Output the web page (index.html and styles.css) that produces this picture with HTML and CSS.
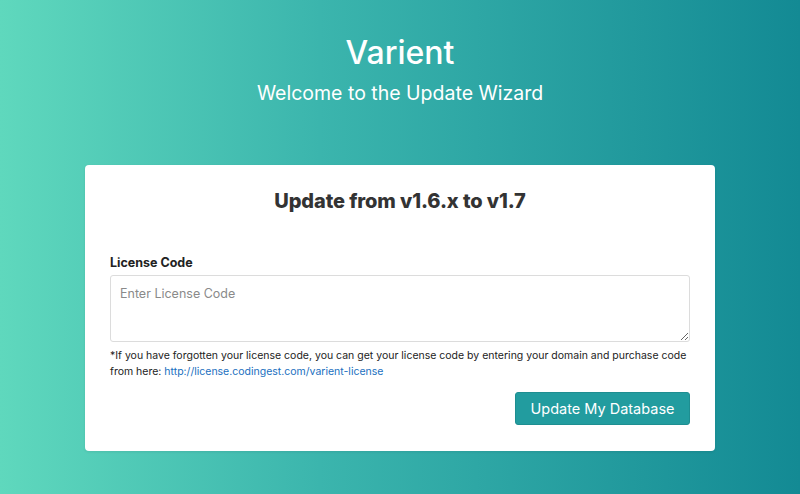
FILE: index.html
```html
<!DOCTYPE html>
<html lang="en">
<head>
<meta charset="utf-8">
<title>Varient - Update Wizard</title>
<link rel="stylesheet" href="styles.css">
</head>
<body>
<header class="hero">
  <h1 class="brand">Varient</h1>
  <p class="tagline">Welcome to the Update Wizard</p>
</header>
<main class="card">
  <h2 class="card-title">Update from v1.6.x to v1.7</h2>
  <form class="form">
    <label class="label" for="license">License Code</label>
    <textarea id="license" class="input" placeholder="Enter License Code"></textarea>
    <p class="note">
      <span class="note-line">*If you have forgotten your license code, you can get your license code by entering your domain and purchase code</span>
      <span class="note-line">from here: <a href="#" class="link">http://license.codingest.com/varient-license</a></span>
    </p>
    <div class="actions">
      <button type="button" class="btn">Update My Database</button>
    </div>
  </form>
</main>
</body>
</html>
```
FILE: styles.css
```css
html, body {
  margin: 0;
  height: 100%;
}
body {
  background: linear-gradient(to right, #5fd8bd 0%, #3bb5ad 40%, #138a94 100%);
  font-family: Inter, "Open Sans", sans-serif;
  color: #333;
  overflow: hidden;
}
.hero {
  text-align: center;
  color: #fff;
  padding-top: 34px;
}
.brand {
  margin: 0;
  font-size: 32px;
  line-height: 38px;
  font-weight: 500;
}
.tagline {
  margin: 9px 0 0;
  font-size: 19.5px;
  line-height: 24px;
  font-weight: 400;
}
.card {
  width: 630px;
  box-sizing: border-box;
  margin: 60px auto 0;
  background: #fff;
  border-radius: 4px;
  padding: 23px 25px 26px;
  box-shadow: 0 1px 3px rgba(0,0,0,0.08);
}
.card-title {
  margin: 0;
  text-align: center;
  font-size: 20px;
  line-height: 26px;
  font-weight: 800;
  color: #333;
  letter-spacing: -0.1px;
}
.form {
  margin-top: 40px;
  display: flex;
  flex-direction: column;
}
.label {
  font-size: 12.5px;
  font-weight: 700;
  line-height: 18px;
  color: #222;
  margin-bottom: 3px;
}
.input {
  height: 67px;
  box-sizing: border-box;
  border: 1px solid #dcdcdc;
  border-radius: 3px;
  padding: 10px 9px;
  font-family: inherit;
  font-size: 12.5px;
  color: #333;
  resize: vertical;
}
.input::placeholder {
  color: #8a8a8a;
}
.note {
  margin: 6px 0 0;
  font-size: 10.5px;
  line-height: 16px;
  color: #222;
}
.note-line {
  display: block;
  white-space: nowrap;
}
.link {
  color: #1a6fc0;
  text-decoration: none;
}
.actions {
  display: flex;
  justify-content: flex-end;
  margin-top: 12px;
}
.btn {
  width: 175px;
  height: 33px;
  background: #229c9f;
  border: 1px solid #1e8e91;
  border-radius: 3px;
  color: #fff;
  font-family: inherit;
  font-size: 14.5px;
  font-weight: 400;
  cursor: pointer;
}
```
